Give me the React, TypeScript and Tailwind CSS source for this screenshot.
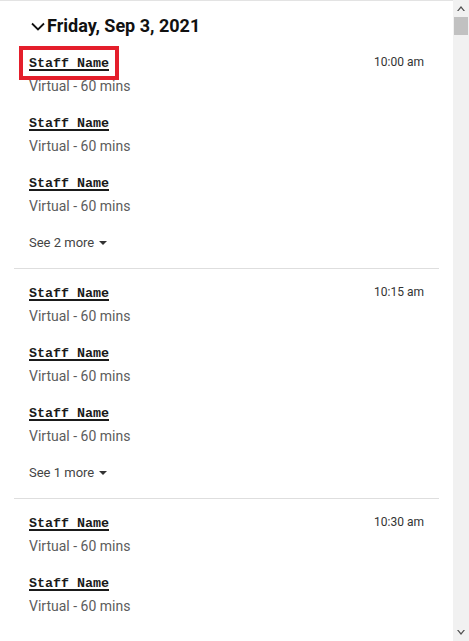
import React from "react";

type Slot = {
  time: string;
  staff: number;
  more: number;
};

const slots: Slot[] = [
  { time: "10:00 am", staff: 3, more: 2 },
  { time: "10:15 am", staff: 3, more: 1 },
  { time: "10:30 am", staff: 2, more: 0 },
];

const ChevronDown = () => (
  <svg width="14" height="9" viewBox="0 0 14 9" fill="none" className="shrink-0">
    <path d="M1 1.5 L7 7.5 L13 1.5" stroke="#111" strokeWidth="1.8" />
  </svg>
);

const StaffItem = ({ time, focused }: { time?: string; focused?: boolean }) => (
  <div className="flex flex-col gap-[4px]">
    <div className="flex items-center justify-between h-[20px]">
      <span className="relative inline-block">
        <button className="font-['Liberation_Mono',monospace] font-bold text-[13.33px] leading-[20px] text-[#1a1a1a] underline decoration-2 underline-offset-[2px]">
          Staff Name
        </button>
        {focused && (
          <span className="absolute -left-[10px] -right-[10px] -top-[4px] -bottom-[6px] border-4 border-[#e41e2b] pointer-events-none" />
        )}
      </span>
      {time && <span className="text-[12px] text-[#333] leading-[20px]">{time}</span>}
    </div>
    <p className="text-[14px] leading-[20px] text-[#5c5c5c]">Virtual - 60 mins</p>
  </div>
);

const SlotBlock = ({ slot, first, last }: { slot: Slot; first?: boolean; last?: boolean }) => (
  <div
    className={
      first
        ? "mx-[14px] px-[15px] pb-[15px] border-b border-[#dedede]"
        : last
        ? "mx-[14px] px-[15px] pt-[13px] pb-[40px] border-b border-[#dedede]"
        : "mx-[14px] px-[15px] pt-[13px] pb-[15px] border-b border-[#dedede]"
    }
  >
    <div className="flex flex-col gap-[16px]">
      {Array.from({ length: slot.staff }).map((_, i) => (
        <StaffItem key={i} time={i === 0 ? slot.time : undefined} focused={first && i === 0} />
      ))}
    </div>
    {slot.more > 0 && (
      <button className="mt-[17px] flex items-center gap-[5px] text-[13px] leading-[20px] text-[#444]">
        See {slot.more} more
        <svg width="8" height="4" viewBox="0 0 8 4">
          <path d="M0 0 L8 0 L4 4 Z" fill="#333" />
        </svg>
      </button>
    )}
  </div>
);

const Scrollbar = () => (
  <div className="w-[16px] shrink-0 flex flex-col bg-[#f1f1f1]">
    <div className="h-[17px] flex items-center justify-center">
      <svg width="8" height="5" viewBox="0 0 8 5">
        <path d="M0 5 L4 0 L8 5 L6.5 5 L4 2 L1.5 5 Z" fill="#505050" />
      </svg>
    </div>
    <div className="h-[18px] mx-[1px] bg-[#c1c1c1]" />
    <div className="flex-1" />
    <div className="h-[17px] flex items-center justify-center">
      <svg width="8" height="5" viewBox="0 0 8 5">
        <path d="M0 0 L4 5 L8 0 L6.5 0 L4 3 L1.5 0 Z" fill="#505050" />
      </svg>
    </div>
  </div>
);

export default function App() {
  return (
    <div className="h-[641px] w-[469px] flex bg-white font-['Roboto',sans-serif]">
      <div className="flex-1 overflow-hidden border-t border-[#e3e3e3]">
        <h2 className="flex items-center gap-[2px] pl-[31px] pt-[11px] pb-[12px] text-[18px] leading-[28px] font-bold text-[#111]">
          <ChevronDown />
          Friday, Sep 3, 2021
        </h2>
        {slots.map((slot, i) => (
          <SlotBlock key={i} slot={slot} first={i === 0} last={i === slots.length - 1} />
        ))}
      </div>
      <Scrollbar />
    </div>
  );
}
